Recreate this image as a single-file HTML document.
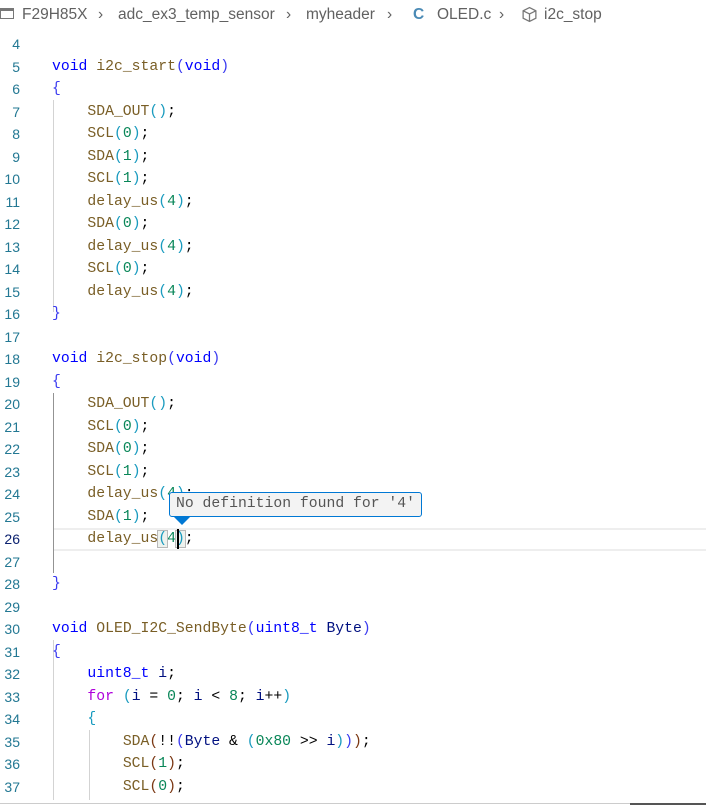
<!DOCTYPE html>
<html><head><meta charset="utf-8"><style>
*{margin:0;padding:0;box-sizing:border-box}
body{width:706px;height:810px;background:#fff;position:relative;overflow:hidden;font-family:"Liberation Mono",monospace}
.bc{position:absolute;top:6px;left:0;height:22px;font:15.5px "Liberation Sans",sans-serif;color:#616161;white-space:nowrap}
.bc span{position:absolute;top:0}
.ln{position:absolute;left:0;width:20px;text-align:right;font:14px "Liberation Sans",sans-serif;color:#237893;line-height:22.5px}
.code{position:absolute;left:52px;font-size:14.75px;line-height:22.5px;white-space:pre;color:#000}
.k{color:#0000ff}.f{color:#795e26}.n{color:#098658}.p{color:#af00db}.v{color:#001080}
.b1{color:#3b3bf0}.b2{color:#1a9bbf}.b3{color:#7b3814}
.g{position:absolute;width:1px;background:#d3d3d3}
</style></head><body>
<div class="bc">
<span style="left:0;top:2px;width:14px;height:11px;border:1.3px solid #777;border-top-width:3px;"></span>
<span style="left:22px">F29H85X</span>
<span style="left:98px">›</span>
<span style="left:118px">adc_ex3_temp_sensor</span>
<span style="left:286px">›</span>
<span style="left:306px">myheader</span>
<span style="left:387px">›</span>
<span style="left:413px;color:#4a8ab5;font-weight:bold">C</span>
<span style="left:437px">OLED.c</span>
<span style="left:499px">›</span>
<span style="left:521px;top:0px"><svg width="17" height="17" viewBox="0 0 16 16" fill="none" stroke="#777" stroke-width="1.2"><path d="M8 1.5L14 4.5V11.5L8 14.5L2 11.5V4.5Z M2 4.5L8 7.5L14 4.5 M8 7.5V14.5"/></svg></span>
<span style="left:544px">i2c_stop</span>
</div>
<div style="position:absolute;left:53px;top:528px;width:653px;height:23px;border-top:2px solid #eee;border-bottom:2px solid #eee"></div>
<div class="g" style="left:53px;top:100px;height:212px"></div>
<div class="g" style="left:53px;top:393px;height:180px;background:#939393"></div>
<div class="g" style="left:53px;top:640px;height:160px"></div>
<div class="g" style="left:89px;top:730px;height:70px"></div>
<div class="ln" style="top:33px">4<br>5<br>6<br>7<br>8<br>9<br>10<br>11<br>12<br>13<br>14<br>15<br>16<br>17<br>18<br>19<br>20<br>21<br>22<br>23<br>24<br>25<br><span style="color:#0b216f">26</span><br>27<br>28<br>29<br>30<br>31<br>32<br>33<br>34<br>35<br>36<br>37</div>
<div class="code" style="top:33px">
<span class="k">void</span> <span class="f">i2c_start</span><span class="b1">(</span><span class="k">void</span><span class="b1">)</span>
<span class="b1">{</span>
    <span class="f">SDA_OUT</span><span class="b2">()</span>;
    <span class="f">SCL</span><span class="b2">(</span><span class="n">0</span><span class="b2">)</span>;
    <span class="f">SDA</span><span class="b2">(</span><span class="n">1</span><span class="b2">)</span>;
    <span class="f">SCL</span><span class="b2">(</span><span class="n">1</span><span class="b2">)</span>;
    <span class="f">delay_us</span><span class="b2">(</span><span class="n">4</span><span class="b2">)</span>;
    <span class="f">SDA</span><span class="b2">(</span><span class="n">0</span><span class="b2">)</span>;
    <span class="f">delay_us</span><span class="b2">(</span><span class="n">4</span><span class="b2">)</span>;
    <span class="f">SCL</span><span class="b2">(</span><span class="n">0</span><span class="b2">)</span>;
    <span class="f">delay_us</span><span class="b2">(</span><span class="n">4</span><span class="b2">)</span>;
<span class="b1">}</span>

<span class="k">void</span> <span class="f">i2c_stop</span><span class="b1">(</span><span class="k">void</span><span class="b1">)</span>
<span class="b1">{</span>
    <span class="f">SDA_OUT</span><span class="b2">()</span>;
    <span class="f">SCL</span><span class="b2">(</span><span class="n">0</span><span class="b2">)</span>;
    <span class="f">SDA</span><span class="b2">(</span><span class="n">0</span><span class="b2">)</span>;
    <span class="f">SCL</span><span class="b2">(</span><span class="n">1</span><span class="b2">)</span>;
    <span class="f">delay_us</span><span class="b2">(</span><span class="n">4</span><span class="b2">)</span>;
    <span class="f">SDA</span><span class="b2">(</span><span class="n">1</span><span class="b2">)</span>;
    <span class="f">delay_us</span><span class="b2" style="outline:1px solid #b9b9b9;background:#eef2ee">(</span><span class="n">4</span><span class="b2" style="outline:1px solid #b9b9b9;background:#eef2ee">)</span>;

<span class="b1">}</span>

<span class="k">void</span> <span class="f">OLED_I2C_SendByte</span><span class="b1">(</span><span class="k">uint8_t</span> <span class="v">Byte</span><span class="b1">)</span>
<span class="b1">{</span>
    <span class="k">uint8_t</span> <span class="v">i</span>;
    <span class="p">for</span> <span class="b2">(</span><span class="v">i</span> = <span class="n">0</span>; <span class="v">i</span> &lt; <span class="n">8</span>; <span class="v">i</span>++<span class="b2">)</span>
    <span class="b2">{</span>
        <span class="f">SDA</span><span class="b3">(</span>!!<span class="b1">(</span><span class="v">Byte</span> &amp; <span class="b2">(</span><span class="n">0x80</span> &gt;&gt; <span class="v">i</span><span class="b2">)</span><span class="b1">)</span><span class="b3">)</span>;
        <span class="f">SCL</span><span class="b3">(</span><span class="n">1</span><span class="b3">)</span>;
        <span class="f">SCL</span><span class="b3">(</span><span class="n">0</span><span class="b3">)</span>;
</div>
<div style="position:absolute;left:177px;top:529px;width:2px;height:20px;background:#000"></div>
<div style="position:absolute;left:169px;top:492px;width:253px;height:25px;background:#f3f3f3;border:1px solid #0078d4;border-radius:3px;font-size:14.75px;line-height:23px;padding-left:6px;color:#555;white-space:pre">No definition found for '4'</div>
<div style="position:absolute;left:173px;top:516px;width:0;height:0;border-left:9px solid transparent;border-right:9px solid transparent;border-top:9px solid #0078d4"></div>
<div style="position:absolute;left:0;top:803px;width:706px;height:7px;background:#fff;border-top:1px solid #ccc"></div>
<div style="position:absolute;left:630px;top:803px;width:76px;height:2px;background:#555"></div>
</body></html>
